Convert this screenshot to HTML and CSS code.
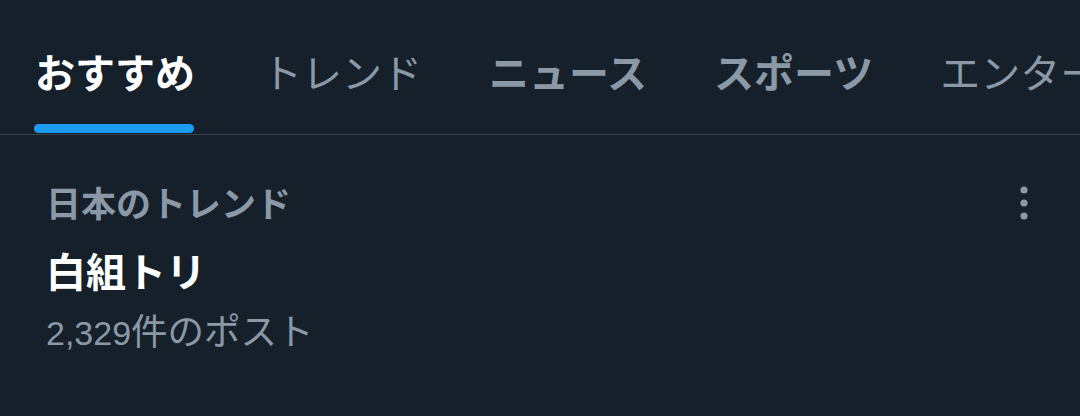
FILE: index.html
```html
<!DOCTYPE html>
<html lang="ja">
<head>
<meta charset="utf-8">
<link rel="stylesheet" href="styles.css">
</head>
<body>
<nav class="tabs">
  <div class="tab active"><span class="label">おすすめ</span><span class="indicator"></span></div>
  <div class="tab"><span class="label light">トレンド</span></div>
  <div class="tab"><span class="label">ニュース</span></div>
  <div class="tab"><span class="label">スポーツ</span></div>
  <div class="tab"><span class="label light">エンター</span></div>
</nav>
<section class="trend">
  <div class="trend-body">
    <div class="context">日本のトレンド</div>
    <div class="title">白組トリ</div>
    <div class="count"><span class="num">2,329</span>件のポスト</div>
  </div>
  <svg class="more" width="14" height="34" viewBox="0 0 14 34">
    <circle cx="7" cy="4" r="3.6" fill="#8b98a5"/>
    <circle cx="7" cy="17" r="3.6" fill="#8b98a5"/>
    <circle cx="7" cy="30" r="3.6" fill="#8b98a5"/>
  </svg>
</section>
</body>
</html>
```
FILE: styles.css
```css
html, body {
  margin: 0;
  padding: 0;
  background: #15202b;
  width: 1080px;
  height: 416px;
  overflow: hidden;
  font-family: "Noto Sans CJK JP", "Noto Sans", sans-serif;
}
.tabs {
  display: flex;
  gap: 67px;
  padding-left: 35px;
  height: 134px;
  border-bottom: 1px solid #38444d;
  white-space: nowrap;
  overflow: hidden;
}
.tab {
  position: relative;
  display: flex;
  flex-direction: column;
  flex-shrink: 0;
}
.label {
  font-size: 40px;
  line-height: 40px;
  margin-top: 51px;
  font-weight: 700;
  color: #8b98a5;
}
.label.light {
  font-weight: 400;
}
.tab.active .label {
  color: #ffffff;
}
.indicator {
  position: absolute;
  left: -1px;
  right: 1px;
  bottom: 1px;
  height: 9px;
  border-radius: 5px;
  background: #1d9bf0;
}
.trend {
  display: flex;
  justify-content: space-between;
  padding: 0 49px 0 46px;
}
.context {
  margin-top: 48px;
  font-size: 35px;
  line-height: 38px;
  font-weight: 700;
  color: #8b98a5;
}
.title {
  margin-top: 27px;
  font-size: 40px;
  line-height: 44px;
  font-weight: 700;
  color: #ffffff;
}
.count {
  margin-top: 18px;
  font-size: 36.5px;
  line-height: 40px;
  font-weight: 400;
  color: #8b98a5;
}
.num {
  font-family: "Liberation Sans", Arial, sans-serif;
  font-size: 34px;
}
.more {
  margin-top: 51px;
}
```
